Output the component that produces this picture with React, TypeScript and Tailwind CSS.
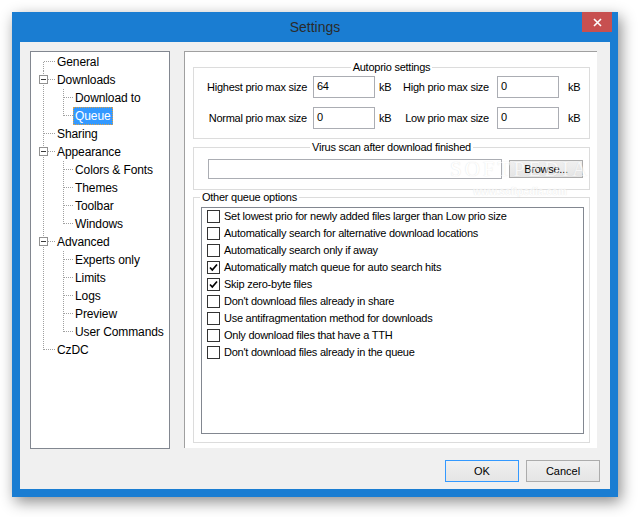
import React from 'react';

type TreeRow = {
  label: string;
  level: 0 | 1;
  expander?: boolean;
  last?: boolean;
  selected?: boolean;
};

const treeRows: TreeRow[] = [
  { label: 'General', level: 0 },
  { label: 'Downloads', level: 0, expander: true },
  { label: 'Download to', level: 1 },
  { label: 'Queue', level: 1, last: true, selected: true },
  { label: 'Sharing', level: 0 },
  { label: 'Appearance', level: 0, expander: true },
  { label: 'Colors & Fonts', level: 1 },
  { label: 'Themes', level: 1 },
  { label: 'Toolbar', level: 1 },
  { label: 'Windows', level: 1, last: true },
  { label: 'Advanced', level: 0, expander: true },
  { label: 'Experts only', level: 1 },
  { label: 'Limits', level: 1 },
  { label: 'Logs', level: 1 },
  { label: 'Preview', level: 1 },
  { label: 'User Commands', level: 1, last: true },
  { label: 'CzDC', level: 0 },
];

const queueOptions = [
  { label: 'Set lowest prio for newly added files larger than Low prio size', checked: false },
  { label: 'Automatically search for alternative download locations', checked: false },
  { label: 'Automatically search only if away', checked: false },
  { label: 'Automatically match queue for auto search hits', checked: true },
  { label: 'Skip zero-byte files', checked: true },
  { label: "Don't download files already in share", checked: false },
  { label: 'Use antifragmentation method for downloads', checked: false },
  { label: 'Only download files that have a TTH', checked: false },
  { label: "Don't download files already in the queue", checked: false },
];

function TreeLines({ row, index }: { row: TreeRow; index: number }) {
  const width = row.level === 0 ? 24 : 42;
  const first = index === 0;
  const lastRoot = index === treeRows.length - 1;
  const dot = { stroke: '#a0a0a0', strokeWidth: 1, strokeDasharray: '1 1' };

  return (
    <svg width={width} height={18} className="shrink-0">
      {/* root level vertical line */}
      <line x1={12.5} x2={12.5} y1={first ? 9 : 0} y2={lastRoot ? 9 : 18} {...dot} />
      {row.level === 0 && (
        <line x1={row.expander ? 17 : 13} x2={24} y1={8.5} y2={8.5} {...dot} />
      )}
      {row.level === 1 && (
        <>
          <line x1={32.5} x2={32.5} y1={0} y2={row.last ? 9 : 18} {...dot} />
          <line x1={33} x2={42} y1={8.5} y2={8.5} {...dot} />
        </>
      )}
      {row.expander && (
        <>
          <rect x={8.5} y={4.5} width={8} height={8} fill="#fff" stroke="#929292" />
          <line x1={10} x2={15} y1={8.5} y2={8.5} stroke="#3b3b3b" />
        </>
      )}
    </svg>
  );
}

function Tree() {
  return (
    <div className="w-[140px] h-[398px] shrink-0 border border-[#828790] bg-white pt-[1px] text-[12px] tracking-[-0.1px]">
      {treeRows.map((row, i) => (
        <div key={row.label} className="flex h-[18px] items-center">
          <TreeLines row={row} index={i} />
          <span
            className={
              row.selected
                ? 'px-[2px] h-[18px] leading-[18px] bg-[#3399ff] text-white outline-1 outline-dotted outline-[#d9a04a] -outline-offset-1'
                : 'px-[2px] h-[18px] leading-[18px] text-black'
            }
          >
            {row.label}
          </span>
        </div>
      ))}
    </div>
  );
}

function TextBox({ value, className }: { value?: string; className: string }) {
  return (
    <div className={`border border-[#abadb3] bg-white pl-[3px] pt-[1px] leading-[16px] ${className}`}>
      {value}
    </div>
  );
}

function Button({ label, focused, className }: { label: string; focused?: boolean; className: string }) {
  return (
    <div
      className={`flex items-center justify-center border bg-gradient-to-b from-[#f0f0f0] to-[#e5e5e5] text-[11px] text-black ${
        focused ? 'border-[#3399ff]' : 'border-[#acacac]'
      } ${className}`}
    >
      {label}
    </div>
  );
}

function Checkbox({ checked }: { checked: boolean }) {
  return (
    <div className="w-[13px] h-[13px] shrink-0 border border-[#333333] bg-white flex items-center justify-center">
      {checked && (
        <svg width="11" height="11" viewBox="0 0 11 11">
          <path d="M2 5.5 L4.3 8 L9 2.5" fill="none" stroke="#000" strokeWidth="1.7" />
        </svg>
      )}
    </div>
  );
}

function PrioRow({ left, leftValue, right, rightValue }: { left: string; leftValue: string; right: string; rightValue: string }) {
  return (
    <div className="flex h-[22px] items-center">
      <span className="w-[113px] text-right">{left}</span>
      <TextBox value={leftValue} className="ml-[6px] w-[62px] h-[22px]" />
      <span className="ml-[4px] w-[21px]">kB</span>
      <span className="w-[89px] text-right">{right}</span>
      <TextBox value={rightValue} className="ml-[8px] w-[62px] h-[22px]" />
      <span className="ml-[9px]">kB</span>
    </div>
  );
}

function SettingsPanel() {
  return (
    <div className="ml-[14px] w-[413px] h-[397px] border-t border-l border-[#a0a0a0] bg-white pt-[8px] pl-[8px] text-[11px] tracking-[-0.25px] text-black">
      <fieldset className="w-[397px] border border-[#dcdcdc] pt-[1px] pb-[9px]">
        <legend className="mx-auto px-[2px] leading-[15px]">Autoprio settings</legend>
        <div className="flex flex-col gap-[9px]">
          <PrioRow left="Highest prio max size" leftValue="64" right="High prio max size" rightValue="0" />
          <PrioRow left="Normal prio max size" leftValue="0" right="Low prio max size" rightValue="0" />
        </div>
      </fieldset>

      <fieldset className="mt-[1px] w-[397px] border border-[#dcdcdc] pt-[4px] pb-[10px]">
        <legend className="mx-auto px-[2px] leading-[15px]">Virus scan after download finished</legend>
        <div className="flex items-start pl-[14px]">
          <TextBox className="w-[294px] h-[20px]" />
          <Button label="Browse..." className="ml-[7px] mt-[1px] w-[74px] h-[18px]" />
        </div>
      </fieldset>

      <fieldset className="w-[397px] border border-[#dcdcdc] pt-[2px] pb-[8px]">
        <legend className="ml-[6px] px-[2px] leading-[15px]">Other queue options</legend>
        <div className="ml-[7px] w-[383px] h-[227px] border border-[#828790] bg-white">
          {queueOptions.map((opt) => (
            <div key={opt.label} className="flex h-[17px] items-center pl-[5px]">
              <Checkbox checked={opt.checked} />
              <span className="ml-[4px] whitespace-nowrap">{opt.label}</span>
            </div>
          ))}
        </div>
      </fieldset>
    </div>
  );
}

export default function App() {
  return (
    <div className="relative w-[639px] h-[517px] overflow-hidden bg-white pt-[12px] pl-[12px] font-['Liberation_Sans',Arial,sans-serif]">
      <div className="w-[606px] h-[485px] flex flex-col bg-[#1a7dd2] shadow-[3px_5px_14px_rgba(0,0,0,0.45)]">
        <div className="h-[30px] grid grid-cols-[1fr_auto_1fr]">
          <div />
          <div className="text-[14px] leading-[30px] text-[#2b2b2b]">Settings</div>
          <div className="flex justify-end items-start pr-[6px]">
            <div className="w-[30px] h-[20px] bg-[#c75050] flex items-center justify-center">
              <svg width="9" height="9" viewBox="0 0 9 9">
                <path d="M1 1 L8 8 M8 1 L1 8" stroke="#fff" strokeWidth="1.6" />
              </svg>
            </div>
          </div>
        </div>

        <div className="mx-[8px] h-[447px] flex flex-col bg-[#f0f0f0] pt-[9px] px-[10px]">
          <div className="flex">
            <Tree />
            <SettingsPanel />
          </div>
          <div className="mt-[11px] flex justify-end gap-[7px]">
            <Button label="OK" focused className="w-[74px] h-[22px]" />
            <Button label="Cancel" className="w-[74px] h-[22px]" />
          </div>
        </div>
      </div>

      {/* softpedia watermark */}
      <div className="absolute left-[450px] top-[158px] flex flex-col items-center pointer-events-none opacity-60">
        <span className="font-['Liberation_Serif',serif] text-[21px] leading-[22px] tracking-[3px] text-white [text-shadow:0_0_1px_#c8c8c8]">
          SOFTPEDIA
        </span>
        <span className="mt-[6px] text-[10px] font-bold leading-[12px] text-white [text-shadow:0_0_1px_#c8c8c8]">
          www.softpedia.com
        </span>
      </div>
    </div>
  );
}
